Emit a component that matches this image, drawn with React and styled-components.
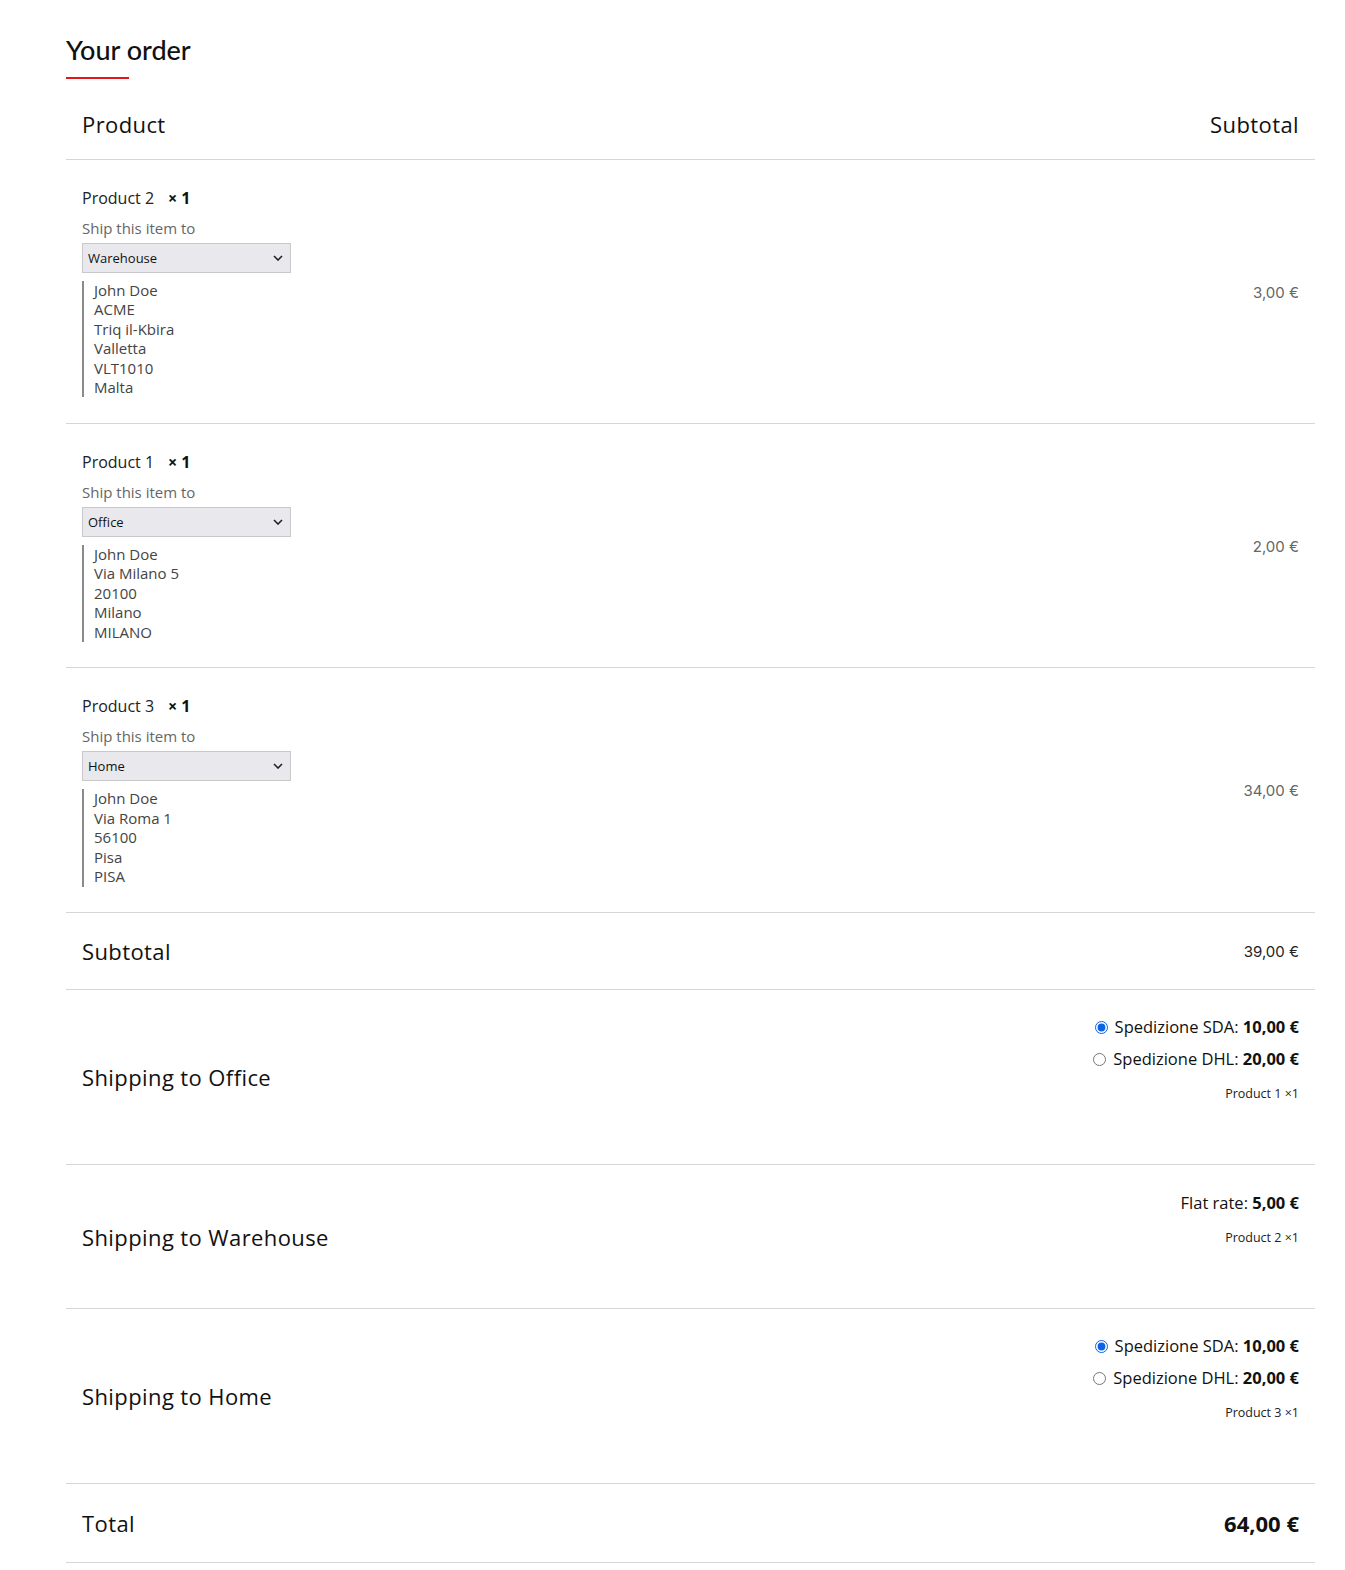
import React from "react";
import styled, { createGlobalStyle } from "styled-components";

const GlobalStyle = createGlobalStyle`
  body {
    margin: 0;
    background: #fff;
    font-family: "Open Sans", "DejaVu Sans", sans-serif;
    color: #222;
  }
`;

const Page = styled.div`
  padding: 34px 0 8px 66px;
`;

const Title = styled.h3`
  margin: 0;
  font-family: "Lato", "Open Sans", sans-serif;
  font-size: 27px;
  line-height: 32px;
  font-weight: 500;
  color: #111;

  &::after {
    content: "";
    display: block;
    width: 63px;
    height: 2px;
    margin-top: 11px;
    background: #e2161b;
  }
`;

const Table = styled.table`
  width: 1249px;
  margin-top: 11px;
  border-collapse: collapse;
`;

const Row = styled.tr`
  border-bottom: 1px solid #d6d6d6;
`;

const HeadCell = styled.th`
  padding: 19px 16px 20px;
  font-size: 22px;
  line-height: 30px;
  font-weight: 500;
  letter-spacing: 0.4px;
  color: #111;
  text-align: ${({ $right }) => ($right ? "right" : "left")};
`;

const LabelCell = styled.th`
  padding: ${({ $pad }) => $pad || "23px"} 16px;
  font-size: 22px;
  line-height: 30px;
  font-weight: 500;
  letter-spacing: 0.4px;
  color: #111;
  text-align: left;
  vertical-align: middle;
`;

const Cell = styled.td`
  padding: ${({ $pad }) => ($pad ? `${$pad} 16px` : "26px 16px 25.5px")};
  vertical-align: ${({ $top }) => ($top ? "top" : "middle")};
  text-align: ${({ $right }) => ($right ? "right" : "left")};
`;

const ProductName = styled.div`
  font-size: 16px;
  line-height: 24px;
  color: #222;
`;

const Qty = styled.strong`
  margin-left: 14px;
  font-weight: 700;
  color: #111;
`;

const ShipLabel = styled.div`
  margin-top: 7px;
  font-size: 15px;
  line-height: 22px;
  color: #666;
`;

const Select = styled.select`
  display: block;
  margin-top: 4px;
  width: 209px;
  height: 30px;
  padding: 0 26px 0 5px;
  appearance: none;
  border: 1px solid #c9c9cc;
  border-radius: 0;
  background: #e9e9ed
    url("data:image/svg+xml,%3Csvg xmlns='http://www.w3.org/2000/svg' width='10' height='6' viewBox='0 0 10 6'%3E%3Cpath d='M1 1l4 4 4-4' fill='none' stroke='%23222' stroke-width='1.6'/%3E%3C/svg%3E")
    no-repeat right 7px center;
  font-family: "Open Sans", sans-serif;
  font-size: 13px;
  color: #111;
`;

const Address = styled.address`
  margin-top: 8px;
  padding-left: 10px;
  border-left: 2px solid #8a8a8a;
  font-style: normal;
  font-size: 15px;
  line-height: 19.4px;
  color: #444;
`;

const Price = styled.span`
  font-family: "Inter", "Roboto", sans-serif;
  font-size: 15px;
  color: ${({ $dark }) => ($dark ? "#222" : "#666")};
`;

const TotalPrice = styled.strong`
  font-size: 22px;
  line-height: 30px;
  font-weight: 700;
  color: #111;
`;

const ShipCell = styled.td`
  padding: ${({ $single }) => ($single ? "22px" : "21px")} 16px 60px;
  text-align: right;
  vertical-align: top;
`;

const Methods = styled.ul`
  margin: 0;
  padding: 0;
  list-style: none;
`;

const Method = styled.li`
  display: flex;
  justify-content: flex-end;
  align-items: center;
  gap: 7px;
  font-size: 16.5px;
  line-height: 32px;
  color: #111;

  input {
    margin: 0;
    width: 13px;
    height: 13px;
    accent-color: #0b63e5;
  }

  b {
    font-weight: 700;
  }
`;

const ForItems = styled.p`
  margin: 9px 0 0;
  font-size: 12.5px;
  line-height: 20px;
  color: #222;
`;

const items = [
  {
    name: "Product 2",
    to: "Warehouse",
    price: "3,00 €",
    address: ["John Doe", "ACME", "Triq il-Kbira", "Valletta", "VLT1010", "Malta"],
  },
  {
    name: "Product 1",
    to: "Office",
    price: "2,00 €",
    address: ["John Doe", "Via Milano 5", "20100", "Milano", "MILANO"],
  },
  {
    name: "Product 3",
    to: "Home",
    price: "34,00 €",
    address: ["John Doe", "Via Roma 1", "56100", "Pisa", "PISA"],
  },
];

const shipping = [
  {
    label: "Shipping to Office",
    group: "office",
    methods: [
      { name: "Spedizione SDA", cost: "10,00 €", checked: true },
      { name: "Spedizione DHL", cost: "20,00 €" },
    ],
    items: "Product 1 ×1",
  },
  {
    label: "Shipping to Warehouse",
    group: "warehouse",
    methods: [{ name: "Flat rate", cost: "5,00 €" }],
    items: "Product 2 ×1",
  },
  {
    label: "Shipping to Home",
    group: "home",
    methods: [
      { name: "Spedizione SDA", cost: "10,00 €", checked: true },
      { name: "Spedizione DHL", cost: "20,00 €" },
    ],
    items: "Product 3 ×1",
  },
];

export default function App() {
  return (
    <Page>
      <GlobalStyle />
      <Title>Your order</Title>
      <Table>
        <thead>
          <Row>
            <HeadCell>Product</HeadCell>
            <HeadCell $right>Subtotal</HeadCell>
          </Row>
        </thead>
        <tbody>
          {items.map((item) => (
            <Row key={item.name}>
              <Cell $top>
                <ProductName>
                  {item.name}
                  <Qty>× 1</Qty>
                </ProductName>
                <ShipLabel>Ship this item to</ShipLabel>
                <Select defaultValue={item.to}>
                  <option>Warehouse</option>
                  <option>Office</option>
                  <option>Home</option>
                </Select>
                <Address>
                  {item.address.map((line) => (
                    <div key={line}>{line}</div>
                  ))}
                </Address>
              </Cell>
              <Cell $right>
                <Price>{item.price}</Price>
              </Cell>
            </Row>
          ))}
        </tbody>
        <tfoot>
          <Row>
            <LabelCell>Subtotal</LabelCell>
            <Cell $right $pad="23px">
              <Price $dark>39,00 €</Price>
            </Cell>
          </Row>
          {shipping.map((s) => {
            const single = s.methods.length === 1;
            return (
              <Row key={s.group}>
                <LabelCell>{s.label}</LabelCell>
                <ShipCell $single={single}>
                  <Methods>
                    {s.methods.map((m) => (
                      <Method key={m.name}>
                        {!single && (
                          <input type="radio" name={s.group} defaultChecked={m.checked} />
                        )}
                        <span>
                          {m.name}: <b>{m.cost}</b>
                        </span>
                      </Method>
                    ))}
                  </Methods>
                  <ForItems>{s.items}</ForItems>
                </ShipCell>
              </Row>
            );
          })}
          <Row>
            <LabelCell $pad="24px">Total</LabelCell>
            <Cell $right $pad="24px">
              <TotalPrice>64,00 €</TotalPrice>
            </Cell>
          </Row>
        </tfoot>
      </Table>
    </Page>
  );
}
